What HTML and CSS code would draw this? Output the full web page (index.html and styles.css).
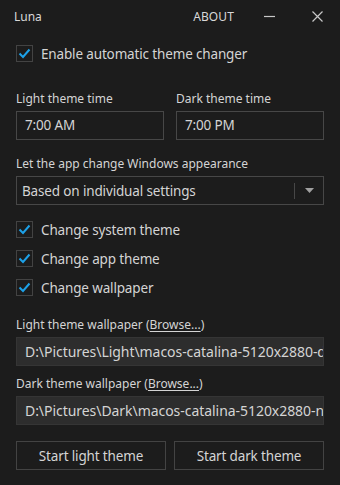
FILE: index.html
```html
<!DOCTYPE html>
<html>
<head>
<meta charset="utf-8">
<link rel="stylesheet" href="styles.css">
</head>
<body>
<div class="app">
  <div class="titlebar">
    <span class="title">Luna</span>
    <span class="about">ABOUT</span>
    <span class="winbtn min"><svg width="11" height="11" viewBox="0 0 11 11"><path d="M0 5.5H11" stroke="#c8c8c8" stroke-width="1.2"/></svg></span>
    <span class="winbtn close"><svg width="11" height="11" viewBox="0 0 11 11"><path d="M0.5 0.5L10.5 10.5M10.5 0.5L0.5 10.5" stroke="#c8c8c8" stroke-width="1.2"/></svg></span>
  </div>
  <div class="content">
    <label class="check main"><span class="box"><svg width="13" height="11" viewBox="0 0 13 11"><path d="M1.5 5.5L5 9L11.5 1.5" fill="none" stroke="#1da1e8" stroke-width="2"/></svg></span>Enable automatic theme changer</label>

    <div class="times">
      <div class="field">
        <div class="label">Light theme time</div>
        <div class="input">7:00 AM</div>
      </div>
      <div class="field">
        <div class="label">Dark theme time</div>
        <div class="input">7:00 PM</div>
      </div>
    </div>

    <div class="label mode-label">Let the app change Windows appearance</div>
    <div class="select">
      <span class="select-text">Based on individual settings</span>
      <span class="sep"></span>
      <span class="arrow"><svg width="9" height="5" viewBox="0 0 9 5"><path d="M0 0H9L4.5 5Z" fill="#a0a0a0"/></svg></span>
    </div>

    <div class="checks">
      <label class="check"><span class="box"><svg width="13" height="11" viewBox="0 0 13 11"><path d="M1.5 5.5L5 9L11.5 1.5" fill="none" stroke="#1da1e8" stroke-width="2"/></svg></span>Change system theme</label>
      <label class="check"><span class="box"><svg width="13" height="11" viewBox="0 0 13 11"><path d="M1.5 5.5L5 9L11.5 1.5" fill="none" stroke="#1da1e8" stroke-width="2"/></svg></span>Change app theme</label>
      <label class="check"><span class="box"><svg width="13" height="11" viewBox="0 0 13 11"><path d="M1.5 5.5L5 9L11.5 1.5" fill="none" stroke="#1da1e8" stroke-width="2"/></svg></span>Change wallpaper</label>
    </div>

    <div class="label wp-label">Light theme wallpaper (<u>Browse...</u>)</div>
    <div class="input filled">D:\Pictures\Light\macos-catalina-5120x2880-day.jpg</div>
    <div class="label wp-label">Dark theme wallpaper (<u>Browse...</u>)</div>
    <div class="input filled">D:\Pictures\Dark\macos-catalina-5120x2880-night.jpg</div>

    <div class="buttons">
      <button class="btn">Start light theme</button>
      <button class="btn">Start dark theme</button>
    </div>
  </div>
</div>
</body>
</html>
```

FILE: styles.css
```css
html, body {
  margin: 0;
  padding: 0;
  background: #1c1c1c;
}
body {
  font-family: "Noto Sans", "Open Sans", sans-serif;
  color: #d4d4d4;
  width: 340px;
  height: 485px;
  overflow: hidden;
}
.app {
  display: flex;
  flex-direction: column;
}
.titlebar {
  display: flex;
  align-items: center;
  height: 32px;
  padding-left: 14px;
  font-size: 12px;
  color: #d8d8d8;
}
.title {
  flex: 1;
}
.about {
  font-size: 12px;
  margin-right: 30px;
  letter-spacing: 0.1px;
}
.winbtn {
  display: flex;
  align-items: center;
  justify-content: center;
}
.min {
  width: 11px;
  margin-right: 37px;
}
.close {
  width: 11px;
  margin-right: 17px;
}
.content {
  padding: 0 16px;
  display: flex;
  flex-direction: column;
}
.check {
  display: flex;
  align-items: center;
  font-size: 13.5px;
  letter-spacing: -0.15px;
  height: 17px;
  color: #d4d4d4;
}
.box {
  box-sizing: border-box;
  width: 17px;
  height: 17px;
  border: 1px solid #434343;
  display: flex;
  align-items: center;
  justify-content: center;
  margin-right: 8px;
  flex: none;
}
.check.main {
  margin-top: 13px;
}
.times {
  display: grid;
  grid-template-columns: 1fr 1fr;
  column-gap: 12px;
  margin-top: 29px;
}
.label {
  font-size: 12px;
  line-height: 16px;
  color: #d4d4d4;
}
.input {
  box-sizing: border-box;
  height: 29px;
  border: 1px solid #474747;
  margin-top: 4px;
  padding: 0 8px;
  font-size: 13.5px;
  letter-spacing: -0.15px;
  line-height: 27px;
  white-space: nowrap;
  overflow: hidden;
}
.mode-label {
  margin-top: 16px;
}
.select {
  box-sizing: border-box;
  height: 29px;
  border: 1px solid #474747;
  margin-top: 4px;
  display: flex;
  align-items: center;
  font-size: 13.5px;
  letter-spacing: -0.15px;
  padding-left: 5px;
}
.select-text {
  flex: 1;
}
.sep {
  width: 1px;
  height: 16px;
  background: #474747;
}
.arrow {
  width: 28px;
  display: flex;
  justify-content: center;
  align-items: center;
}
.checks {
  display: flex;
  flex-direction: column;
  gap: 12px;
  margin-top: 16px;
}
.checks + .wp-label {
  margin-top: 21px;
}
.input.filled {
  background: #2d2d2d;
  border-color: #353535;
  padding: 0 8px;
  font-size: 14px;
  letter-spacing: -0.05px;
}
.input.filled + .wp-label {
  margin-top: 10px;
}
u {
  text-underline-offset: 2px;
}
.buttons {
  display: grid;
  grid-template-columns: 1fr 1fr;
  column-gap: 8px;
  margin-top: 16px;
}
.btn {
  box-sizing: border-box;
  height: 29px;
  background: #1c1c1c;
  border: 1px solid #434343;
  color: #d4d4d4;
  font-family: "Noto Sans", "Open Sans", sans-serif;
  font-size: 13.5px;
  letter-spacing: -0.15px;
  padding: 0;
}
```
